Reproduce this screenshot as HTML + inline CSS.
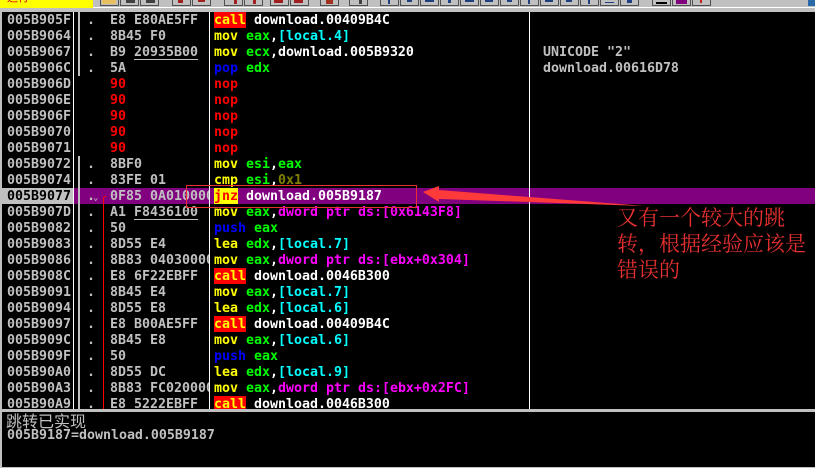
<!DOCTYPE html>
<html><head><meta charset="utf-8"><style>
html,body{margin:0;padding:0;background:#000}
#p{position:relative;width:815px;height:468px;background:#000;overflow:hidden;font:bold 13.29px/16px "DejaVu Sans Mono","Liberation Mono",monospace;color:#c0c0c0}
.r{position:absolute;left:0;width:815px;height:16px;white-space:pre}
.r span{position:absolute;top:1px}
.a{left:7px}.d{left:87px}.h{left:110px}.i{left:214px;isolation:isolate}.c{left:543px}
.bar{position:absolute}
i{font-style:normal}
.y{color:#ff0}.g{color:#0f0}.w{color:#fff}.cy{color:#0ff}.m{color:#f0f}.b{color:#00f}.re{color:#f00}.ol{color:#808000}
.call,.jnz{position:relative;display:inline-block;z-index:0}
.call{color:#ff0}.jnz{color:#f00}
.call::before,.jnz::before{content:"";position:absolute;left:0;right:0;top:-1px;height:16px;z-index:-1}
.call::before{background:#f00}.jnz::before{background:#ff0}
u{text-decoration:none;position:relative;display:inline-block}
u::after{content:"";position:absolute;left:0;right:0;top:14px;height:1px;background:#c0c0c0}
.cl{width:99px;overflow:hidden;height:15px}
.t{position:absolute;top:0;height:5px;width:17px;border:1px solid #505050;border-top:0;background:#c0c0c0;overflow:hidden}
.t b{position:absolute;top:0;height:3px;left:5px;width:7px;background:#404040}
</style></head><body><div id="p">
<div class="bar" style="left:0;top:0;width:815px;height:12px;background:#c0c0c0"></div>
<div class="bar" style="left:0;top:7px;width:815px;height:1px;background:#fff"></div>
<div class="bar" style="left:0;top:0;width:93px;height:8px;background:#ff0;overflow:hidden"><span style="position:absolute;left:7px;top:-9px;font:normal 11px/12px 'Noto Sans CJK SC',sans-serif;color:#e00000">运行</span></div>
<div class="t" style="left:100px"><b style="background:#e8c060;left:1px;width:14px;height:4px"></b></div>
<div class="t" style="left:120px"><b style="width:9px"></b></div>
<div class="t" style="left:140px"><b style="width:9px"></b></div>
<div class="t" style="left:172px"><b style="background:#a02020;width:5px"></b></div>
<div class="t" style="left:192px"><b style="background:#a02020;width:7px;height:2px"></b></div>
<div class="t" style="left:224px"><b style="background:#a02020;left:9px;width:3px;height:4px"></b></div>
<div class="t" style="left:244px"><b style="background:#a02020;left:8px;width:3px;height:4px"></b></div>
<div class="t" style="left:270px"><b style="background:#a02020;width:9px;left:3px"></b></div>
<div class="t" style="left:290px"><b style="background:#a02020;width:9px;left:3px"></b></div>
<div class="t" style="left:320px"><b style="background:#a03020;width:7px;height:4px"></b></div>
<div class="t" style="left:349px"><b style="left:9px;width:3px;height:4px"></b></div>
<div class="t" style="left:380px"><b style="background:#204080;width:2px;left:7px;height:4px"></b></div>
<div class="t" style="left:400px"><b style="background:#204080;width:5px;height:2px;left:6px"></b></div>
<div class="t" style="left:420px"><b style="background:#204080;width:9px;height:2px;left:4px"></b></div>
<div class="t" style="left:440px"><b style="background:#204080;width:3px;left:7px"></b></div>
<div class="t" style="left:460px"><b style="background:#204080;width:9px;height:2px;left:4px"></b></div>
<div class="t" style="left:480px"><b style="background:#204080;width:8px;height:2px;left:4px"></b></div>
<div class="t" style="left:500px"><b style="background:#204080;width:5px;height:2px;left:6px"></b></div>
<div class="t" style="left:520px"><b style="background:#204080;width:2px;left:7px;height:4px"></b></div>
<div class="t" style="left:540px"><b style="background:#204080;width:8px;height:2px;left:4px"></b></div>
<div class="t" style="left:560px"><b style="background:#204080;width:6px;height:2px;left:5px"></b></div>
<div class="t" style="left:580px"><b style="background:#204080;width:2px;left:7px;height:4px"></b></div>
<div class="t" style="left:600px"><b style="background:#204080;width:9px;height:1px;left:4px;top:2px"></b></div>
<div class="t" style="left:620px"><b style="background:#204080;width:5px;height:3px;left:6px"></b></div>
<div class="t" style="left:652px"><b style="background:#000;width:11px;height:2px;left:3px;top:2px"></b></div>
<div class="t" style="left:672px"><b style="background:#800080;width:11px;height:4px;left:3px"></b></div>
<div class="t" style="left:692px"><b style="background:#c02020;width:2px;height:3px;left:7px"></b></div>
<div class="bar" style="left:808px;top:0;width:7px;height:6px;background:#2a6aa8"></div>
<div class="bar" style="left:0;top:12px;width:2px;height:456px;background:#c0c0c0"></div>
<div class="bar" style="left:2px;top:188px;width:71px;height:16px;background:#c0c0c0"></div>
<div class="bar" style="left:73px;top:188px;width:742px;height:16px;background:#800080"></div>
<div class="bar" style="left:73px;top:12px;width:1px;height:397px;background:#fff"></div>
<div class="bar" style="left:209px;top:12px;width:1px;height:397px;background:#fff"></div>
<div class="bar" style="left:529px;top:12px;width:1px;height:397px;background:#fff"></div>
<div class="bar" style="left:78px;top:12px;width:2px;height:64px;background:#c0c0c0"></div>
<div class="bar" style="left:78px;top:156px;width:2px;height:253px;background:#c0c0c0"></div>
<div class="bar" style="left:103px;top:197px;width:1px;height:212px;background:#f00"></div>
<div class="bar" style="left:104px;top:196px;width:2px;height:1px;background:#f00"></div>

<div class="r" style="top:12px"><span class="a">005B905F</span><span class="d">.</span><span class="h">E8 E80AE5FF</span><span class="i"><i class="call">call</i> <i class="w">download.00409B4C</i></span></div>
<div class="r" style="top:28px"><span class="a">005B9064</span><span class="d">.</span><span class="h">8B45 F0</span><span class="i"><i class="y">mov</i> <i class="g">eax</i><i class="w">,</i><i class="cy">[local.4]</i></span></div>
<div class="r" style="top:44px"><span class="a">005B9067</span><span class="d">.</span><span class="h">B9 <u>20935B00</u></span><span class="i"><i class="y">mov</i> <i class="g">ecx</i><i class="w">,download.005B9320</i></span><span class="c">UNICODE "2"</span></div>
<div class="r" style="top:60px"><span class="a">005B906C</span><span class="d">.</span><span class="h">5A</span><span class="i"><i class="b">pop</i> <i class="g">edx</i></span><span class="c">download.00616D78</span></div>
<div class="r" style="top:76px"><span class="a">005B906D</span><span class="h re">90</span><span class="i re">nop</span></div>
<div class="r" style="top:92px"><span class="a">005B906E</span><span class="h re">90</span><span class="i re">nop</span></div>
<div class="r" style="top:108px"><span class="a">005B906F</span><span class="h re">90</span><span class="i re">nop</span></div>
<div class="r" style="top:124px"><span class="a">005B9070</span><span class="h re">90</span><span class="i re">nop</span></div>
<div class="r" style="top:140px"><span class="a">005B9071</span><span class="h re">90</span><span class="i re">nop</span></div>
<div class="r" style="top:156px"><span class="a">005B9072</span><span class="d">.</span><span class="h">8BF0</span><span class="i"><i class="y">mov</i> <i class="g">esi</i><i class="w">,</i><i class="g">eax</i></span></div>
<div class="r" style="top:172px"><span class="a">005B9074</span><span class="d">.</span><span class="h">83FE 01</span><span class="i"><i class="y">cmp</i> <i class="g">esi</i><i class="w">,</i><i class="ol">0x1</i></span></div>
<div class="r" style="top:188px"><span class="a" style="color:#000">005B9077</span><span class="d">.</span><span style="left:93px;top:2px;font-size:9px;font-weight:normal">&#8964;</span><span class="h cl">0F85 0A010000</span><span class="i"><i class="jnz">jnz</i> <i class="w">download.005B9187</i></span></div>
<div class="r" style="top:204px"><span class="a">005B907D</span><span class="d">.</span><span class="h">A1 <u>F8436100</u></span><span class="i"><i class="y">mov</i> <i class="g">eax</i><i class="w">,</i><i class="m">dword ptr ds:[0x6143F8]</i></span></div>
<div class="r" style="top:220px"><span class="a">005B9082</span><span class="d">.</span><span class="h">50</span><span class="i"><i class="b">push</i> <i class="g">eax</i></span></div>
<div class="r" style="top:236px"><span class="a">005B9083</span><span class="d">.</span><span class="h">8D55 E4</span><span class="i"><i class="y">lea</i> <i class="g">edx</i><i class="w">,</i><i class="cy">[local.7]</i></span></div>
<div class="r" style="top:252px"><span class="a">005B9086</span><span class="d">.</span><span class="h cl">8B83 04030000</span><span class="i"><i class="y">mov</i> <i class="g">eax</i><i class="w">,</i><i class="m">dword ptr ds:[ebx+0x304]</i></span></div>
<div class="r" style="top:268px"><span class="a">005B908C</span><span class="d">.</span><span class="h">E8 6F22EBFF</span><span class="i"><i class="call">call</i> <i class="w">download.0046B300</i></span></div>
<div class="r" style="top:284px"><span class="a">005B9091</span><span class="d">.</span><span class="h">8B45 E4</span><span class="i"><i class="y">mov</i> <i class="g">eax</i><i class="w">,</i><i class="cy">[local.7]</i></span></div>
<div class="r" style="top:300px"><span class="a">005B9094</span><span class="d">.</span><span class="h">8D55 E8</span><span class="i"><i class="y">lea</i> <i class="g">edx</i><i class="w">,</i><i class="cy">[local.6]</i></span></div>
<div class="r" style="top:316px"><span class="a">005B9097</span><span class="d">.</span><span class="h">E8 B00AE5FF</span><span class="i"><i class="call">call</i> <i class="w">download.00409B4C</i></span></div>
<div class="r" style="top:332px"><span class="a">005B909C</span><span class="d">.</span><span class="h">8B45 E8</span><span class="i"><i class="y">mov</i> <i class="g">eax</i><i class="w">,</i><i class="cy">[local.6]</i></span></div>
<div class="r" style="top:348px"><span class="a">005B909F</span><span class="d">.</span><span class="h">50</span><span class="i"><i class="b">push</i> <i class="g">eax</i></span></div>
<div class="r" style="top:364px"><span class="a">005B90A0</span><span class="d">.</span><span class="h">8D55 DC</span><span class="i"><i class="y">lea</i> <i class="g">edx</i><i class="w">,</i><i class="cy">[local.9]</i></span></div>
<div class="r" style="top:380px"><span class="a">005B90A3</span><span class="d">.</span><span class="h cl">8B83 FC020000</span><span class="i"><i class="y">mov</i> <i class="g">eax</i><i class="w">,</i><i class="m">dword ptr ds:[ebx+0x2FC]</i></span></div>
<div class="r" style="top:396px;height:13px;overflow:hidden"><span class="a">005B90A9</span><span class="d">.</span><span class="h">E8 5222EBFF</span><span class="i"><i class="call">call</i> <i class="w">download.0046B300</i></span></div>

<div class="bar" style="left:0;top:409px;width:815px;height:3px;background:#c0c0c0"></div>
<div class="bar" style="left:0;top:467px;width:815px;height:1px;background:#c0c0c0"></div>
<div class="bar" style="left:6px;top:411px;font:normal 16px/18px 'WenQuanYi Zen Hei','Noto Sans CJK SC',sans-serif;color:#c0c0c0;white-space:nowrap">跳转已实现</div>
<div class="r" style="top:427px"><span class="a">005B9187=download.005B9187</span></div>

<svg class="bar" style="left:0;top:0" width="815" height="468">
<rect x="186.500" y="185.500" width="230" height="22" fill="none" stroke="#e83030" stroke-width="1"/>
<polygon points="423,192 439,186 439,190 529,197 645,206 529,202 439,199 439,202" fill="#ff3a3a"/>
</svg>
<div style="position:absolute;left:617px;top:204px;width:198px;font:normal 21px/26px 'Noto Serif CJK SC',serif;color:#e83030;white-space:nowrap">又有一个较大的跳<br>转，根据经验应该是<br>错误的</div>
</div></body></html>
